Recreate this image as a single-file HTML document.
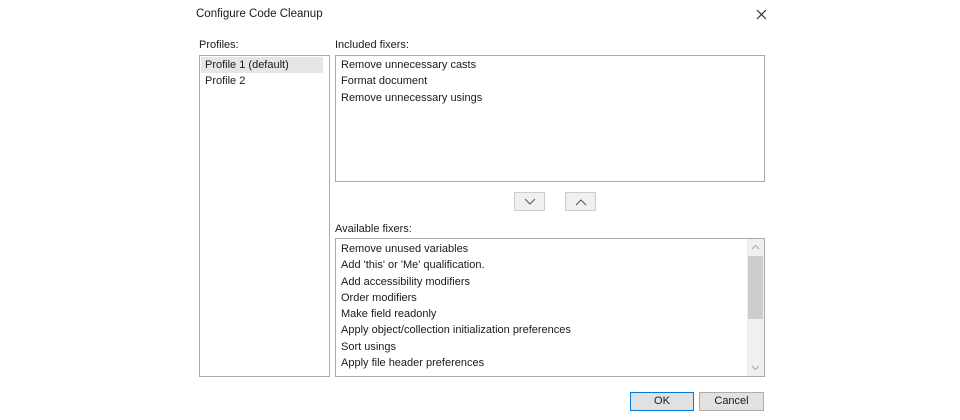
<!DOCTYPE html><html><head><style>
body{margin:0;width:960px;height:420px;background:#fff;font-family:"Liberation Sans",sans-serif;font-size:11px;color:#1a1a1a;position:relative;overflow:hidden}
.a{position:absolute}
.box{position:absolute;border:1px solid #aaa;background:#fff;box-sizing:border-box}
.it{position:absolute;left:5px;height:16px;line-height:16px;white-space:nowrap}
.btn{position:absolute;border:1px solid #adadad;background:#e1e1e1;box-sizing:border-box;text-align:center;line-height:17px}
</style></head><body>
<div class="a" style="left:196px;top:8px;font-size:11.5px">Configure Code Cleanup</div>
<svg class="a" style="left:756px;top:9px" width="11" height="11"><path d="M1 1L10 10M10 1L1 10" stroke="#333" stroke-width="1.2"/></svg>
<div class="a" style="left:199px;top:39px">Profiles:</div>
<div class="a" style="left:335px;top:39px">Included fixers:</div>
<div class="box" style="left:199px;top:55px;width:131px;height:322px">
<div class="a" style="left:1px;top:1px;width:122px;height:16px;background:#e6e6e6"></div>
<div class="it" style="top:1px">Profile 1 (default)</div>
<div class="it" style="top:17px">Profile 2</div></div>
<div class="box" style="left:335px;top:55px;width:430px;height:127px">
<div class="it" style="top:1px">Remove unnecessary casts</div>
<div class="it" style="top:17px">Format document</div>
<div class="it" style="top:34px">Remove unnecessary usings</div></div>
<div class="btn" style="left:514px;top:192px;width:31px;height:19px;background:#f0f0f0;border-color:#ccc"><svg width="12" height="8" style="margin-top:5px"><path d="M1 1L6 6L11 1" fill="none" stroke="#555"/></svg></div>
<div class="btn" style="left:565px;top:192px;width:31px;height:19px;background:#f0f0f0;border-color:#ccc"><svg width="12" height="8" style="margin-top:5px"><path d="M1 7L6 2L11 7" fill="none" stroke="#555"/></svg></div>
<div class="a" style="left:335px;top:223px">Available fixers:</div>
<div class="box" style="left:335px;top:238px;width:430px;height:139px">
<div class="it" style="top:2px">Remove unused variables</div>
<div class="it" style="top:18px">Add 'this' or 'Me' qualification.</div>
<div class="it" style="top:35px">Add accessibility modifiers</div>
<div class="it" style="top:51px">Order modifiers</div>
<div class="it" style="top:67px">Make field readonly</div>
<div class="it" style="top:83px">Apply object/collection initialization preferences</div>
<div class="it" style="top:100px">Sort usings</div>
<div class="it" style="top:116px">Apply file header preferences</div>
<div class="a" style="left:411px;top:0;width:17px;height:137px;background:#f0f0f0"></div>
<div class="a" style="left:412px;top:17px;width:15px;height:63px;background:#cdcdcd"></div>
<svg class="a" style="left:415px;top:5px" width="9" height="6"><path d="M1 5L4.5 1.5L8 5" fill="none" stroke="#aaa"/></svg>
<svg class="a" style="left:415px;top:126px" width="9" height="6"><path d="M1 1L4.5 4.5L8 1" fill="none" stroke="#aaa"/></svg>
</div>
<div class="btn" style="left:630px;top:392px;width:64px;height:19px;border:1px solid #0078d7">OK</div>
<div class="btn" style="left:699px;top:392px;width:65px;height:19px">Cancel</div>
</body></html>
